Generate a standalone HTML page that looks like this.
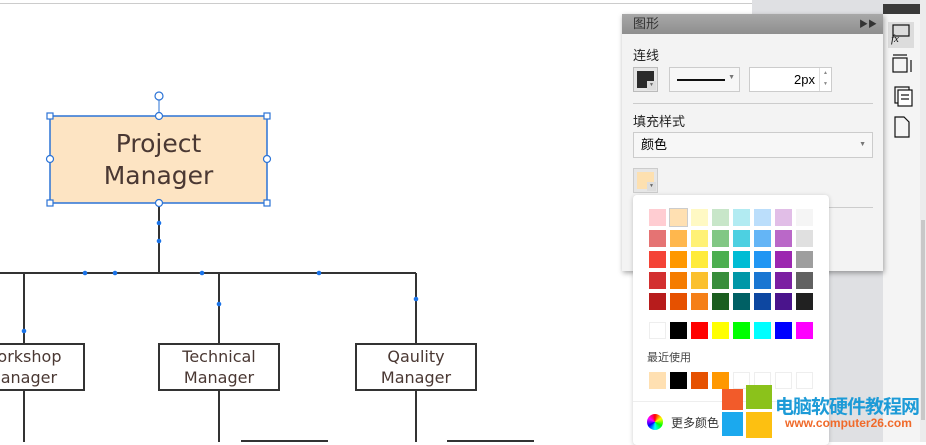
<!DOCTYPE html>
<html><head><meta charset="utf-8"><style>
*{margin:0;padding:0;box-sizing:border-box}
body{width:926px;height:442px;overflow:hidden;position:relative;background:#fff;font-family:"Liberation Sans","Noto Sans CJK SC",sans-serif}
.a{position:absolute}
.sw{position:absolute;width:17px;height:17px}
.txt{font-family:"DejaVu Sans","Liberation Sans",sans-serif;color:#4a3833;text-align:center}
.ar{position:absolute;right:1px;bottom:1px;width:9px;height:9px;background:#ddd;font-size:5px;line-height:9px;text-align:center;color:#666}
</style></head><body>
<div class="a" style="left:0;top:3px;width:752px;height:1px;background:#ccc"></div>
<div class="a" style="left:752px;top:0;width:174px;height:442px;background:#dfe0e3"></div>
<div class="a" style="left:732px;top:14px;width:20px;height:428px;background:#dfe0e3"></div>
<div class="a" style="left:920px;top:0;width:6px;height:442px;background:#ececec"></div>
<div class="a" style="left:921px;top:220px;width:4px;height:200px;background:#c8c8c8"></div>

<svg class="a" style="left:0;top:0" width="620" height="442">
<g stroke="#333" stroke-width="2" fill="none">
<line x1="159" y1="203" x2="159" y2="273"/>
<line x1="0" y1="273" x2="416" y2="273"/>
<line x1="24" y1="273" x2="24" y2="344"/>
<line x1="219" y1="273" x2="219" y2="344"/>
<line x1="416" y1="273" x2="416" y2="344"/>
<line x1="24" y1="390" x2="24" y2="442"/>
<line x1="219" y1="390" x2="219" y2="442"/>
<line x1="416" y1="390" x2="416" y2="442"/>
<line x1="241" y1="441" x2="328" y2="441"/>
<line x1="447" y1="441" x2="534" y2="441"/>
<rect x="-10" y="344" width="94" height="46" fill="#fff"/>
<rect x="159" y="344" width="120" height="46" fill="#fff"/>
<rect x="356" y="344" width="120" height="46" fill="#fff"/>
</g>
<rect x="50" y="116" width="217" height="87" fill="#fde4c3" stroke="#2b73d6" stroke-width="1.5"/>
<line x1="159" y1="100" x2="159" y2="116" stroke="#2b73d6"/>
<g fill="#fff" stroke="#2b73d6" stroke-width="1.2">
<circle cx="159" cy="96" r="4"/><circle cx="159" cy="116" r="3.5"/><circle cx="159" cy="203" r="3.5"/>
<circle cx="50" cy="159" r="3.5"/><circle cx="267" cy="159" r="3.5"/>
<rect x="47" y="113" width="6" height="6"/><rect x="264" y="113" width="6" height="6"/>
<rect x="47" y="200" width="6" height="6"/><rect x="264" y="200" width="6" height="6"/>
</g>
<g fill="#1a73e8">
<circle cx="159" cy="223" r="2.3"/><circle cx="159" cy="241" r="2.3"/>
<circle cx="85" cy="273" r="2.3"/><circle cx="115" cy="273" r="2.3"/><circle cx="202" cy="273" r="2.3"/><circle cx="319" cy="273" r="2.3"/>
<circle cx="24" cy="331" r="2.3"/><circle cx="219" cy="304" r="2.3"/><circle cx="416" cy="299" r="2.3"/>
</g>
</svg>
<div class="a txt" style="left:50px;top:128px;width:217px;font-size:25px;line-height:32px">Project<br>Manager</div>
<div class="a txt" style="left:-40px;top:346px;width:124px;font-size:16px;line-height:21px">Workshop<br>Manager</div>
<div class="a txt" style="left:159px;top:346px;width:120px;font-size:16px;line-height:21px">Technical<br>Manager</div>
<div class="a txt" style="left:356px;top:346px;width:120px;font-size:16px;line-height:21px">Qaulity<br>Manager</div>

<!-- toolbar -->
<div class="a" style="left:883px;top:4px;width:37px;height:10px;background:#3a3a3a"></div>
<div class="a" style="left:883px;top:14px;width:37px;height:428px;background:#f4f4f4"></div>
<div class="a" style="left:888px;top:22px;width:26px;height:26px;background:#dcdcdc"></div>
<svg class="a" style="left:883px;top:14px" width="37" height="130" fill="none" stroke="#111" stroke-width="1.2">
<rect x="10" y="11" width="16" height="11"/><text x="8" y="28" font-size="11" font-style="italic" font-family="Liberation Serif" fill="#111" stroke="none">fx</text>
<rect x="10" y="44" width="14" height="14"/><line x1="10" y1="41" x2="24" y2="41"/><line x1="28" y1="46" x2="28" y2="58"/>
<rect x="12" y="73" width="14" height="16"/><rect x="15" y="76" width="14" height="16" fill="#fff"/><line x1="18" y1="81" x2="26" y2="81"/><line x1="18" y1="85" x2="26" y2="85"/>
<path d="M12 103h9l5 5v15h-14z"/>
</svg>

<!-- panel -->
<div class="a" style="left:622px;top:14px;width:261px;height:257px;background:#f3f3f3;box-shadow:1px 2px 5px rgba(0,0,0,.35)"></div>
<div class="a" style="left:622px;top:14px;width:261px;height:20px;background:linear-gradient(#a8a8a8,#8e8e8e);color:#333;font-size:13px;line-height:20px;padding-left:11px">图形<span style="position:absolute;right:6px;font-size:9px">▶▶</span></div>
<div class="a" style="left:633px;top:45px;font-size:13px;color:#222">连线</div>
<div class="a" style="left:633px;top:67px;width:25px;height:25px;border:1px solid #bbb;background:#e6e6e6"><div style="margin:3px;width:17px;height:17px;background:#2b2b2b"></div><div class="ar">▼</div></div>
<div class="a" style="left:669px;top:67px;width:71px;height:25px;border:1px solid #ccc;background:#f7f7f7"><div style="position:absolute;left:7px;top:11px;width:48px;height:2px;background:#111"></div><span style="position:absolute;right:4px;top:6px;font-size:7px;color:#777">▼</span></div>
<div class="a" style="left:749px;top:67px;width:83px;height:25px;border:1px solid #ccc;background:#fff;font-size:13px;line-height:23px;text-align:right;padding-right:16px">2px<div style="position:absolute;right:0;top:0;width:12px;height:23px;border-left:1px solid #ddd;font-size:5px;line-height:11px;text-align:center;color:#888">▲<br>▼</div></div>
<div class="a" style="left:633px;top:103px;width:240px;height:1px;background:#ccc"></div>
<div class="a" style="left:633px;top:111px;font-size:13px;color:#222">填充样式</div>
<div class="a" style="left:633px;top:132px;width:240px;height:26px;border:1px solid #ccc;background:#f7f7f7;font-size:13px;line-height:24px;padding-left:7px">颜色<span style="position:absolute;right:6px;font-size:7px;color:#777">▼</span></div>
<div class="a" style="left:633px;top:168px;width:25px;height:25px;border:1px solid #ccc;background:#e6e6e6"><div style="margin:3px;width:17px;height:17px;background:#fde0b0"></div><div class="ar">▼</div></div>
<div class="a" style="left:633px;top:207px;width:240px;height:1px;background:#ccc"></div>

<!-- popup -->
<div class="a" style="left:633px;top:195px;width:196px;height:250px;background:#fff;border-radius:4px;box-shadow:0 1px 5px rgba(0,0,0,.2)"></div>
<div id="g"></div>
<div class="a" style="left:647px;top:349px;font-size:11px;color:#444">最近使用</div>
<div class="a" style="left:633px;top:401px;width:196px;height:1px;background:#eee"></div>
<div class="a" style="left:647px;top:414px;width:16px;height:16px;border-radius:50%;background:conic-gradient(red,yellow,lime,cyan,blue,magenta,red)"></div>
<div class="a" style="left:671px;top:414px;font-size:12px;color:#333">更多颜色</div>

<!-- watermark -->
<div class="a" style="left:722px;top:389px;width:21px;height:21px;background:#f25b2a"></div>
<div class="a" style="left:746px;top:385px;width:26px;height:24px;background:#8bc21b"></div>
<div class="a" style="left:722px;top:412px;width:21px;height:24px;background:#1ba9ee"></div>
<div class="a" style="left:746px;top:412px;width:26px;height:26px;background:#fdc011"></div>
<div class="a" style="left:775px;top:392px;font-size:19px;font-weight:bold;color:#1d9bd7;letter-spacing:-1px">电脑软硬件教程网</div>
<div class="a" style="left:785px;top:416px;font-size:12px;font-weight:bold;color:#f06a2a">www.computer26.com</div>

<script>
var c=[["#ffcdd2","#ffe0b2","#fff9c4","#c8e6c9","#b2ebf2","#bbdefb","#e1bee7","#f5f5f5"],
["#e57373","#ffb74d","#fff176","#81c784","#4dd0e1","#64b5f6","#ba68c8","#e0e0e0"],
["#f44336","#ff9800","#ffeb3b","#4caf50","#00bcd4","#2196f3","#9c27b0","#9e9e9e"],
["#d32f2f","#f57c00","#fbc02d","#388e3c","#0097a7","#1976d2","#7b1fa2","#616161"],
["#b71c1c","#e65100","#f57f17","#1b5e20","#006064","#0d47a1","#4a148c","#212121"]];
var s="",ys=[209,230,251,272,293];
c.forEach(function(r,i){r.forEach(function(col,j){s+='<div class="sw" style="left:'+(649+j*21)+'px;top:'+ys[i]+'px;background:'+col+(i==0&&j==1?';outline:1px solid #ccc':'')+'"></div>';});});
["#fff","#000","#f00","#ff0","#0f0","#0ff","#00f","#f0f"].forEach(function(col,j){s+='<div class="sw" style="left:'+(649+j*21)+'px;top:322px;background:'+col+(j==0?';border:1px solid #eee':'')+'"></div>';});
["#ffe0b2","#000","#e65100","#ff9800","#fff","#fff","#fff","#fff"].forEach(function(col,j){s+='<div class="sw" style="left:'+(649+j*21)+'px;top:372px;background:'+col+(j>3?';border:1px solid #eee':'')+'"></div>';});
document.getElementById('g').innerHTML=s;
</script>
</body></html>
